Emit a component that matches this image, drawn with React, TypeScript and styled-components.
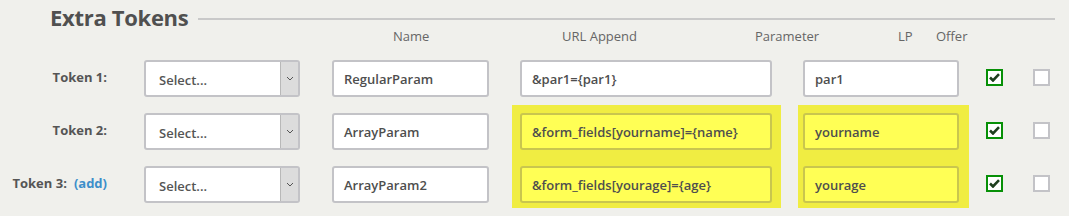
import styled, { createGlobalStyle } from 'styled-components'

const GlobalStyle = createGlobalStyle`
    html, body {
        margin: 0;
        padding: 0;
        background: #f0f0ec;
    }
    body {
        font-family: "Open Sans", "Liberation Sans", sans-serif;
        color: #505050;
    }
`

type Token = {
    label: string
    add?: boolean
    name: string
    url: string
    param: string
    lp: boolean
    offer: boolean
}

const tokens: Token[] = [
    { label: 'Token 1:', name: 'RegularParam', url: '&par1={par1}', param: 'par1', lp: true, offer: false },
    { label: 'Token 2:', name: 'ArrayParam', url: '&form_fields[yourname]={name}', param: 'yourname', lp: true, offer: false },
    { label: 'Token 3:', add: true, name: 'ArrayParam2', url: '&form_fields[yourage]={age}', param: 'yourage', lp: true, offer: false },
]

const Chevron = () => (
    <svg width="8" height="5" viewBox="0 0 8 5">
        <path d="M1 1 L4 4 L7 1" fill="none" stroke="#555" strokeWidth="1" />
    </svg>
)

const Check = () => (
    <svg width="11" height="9" viewBox="0 0 11 9">
        <path d="M1 4.5 L4 7.5 L10 1.2" fill="none" stroke="#1e3f1e" strokeWidth="2.6" />
    </svg>
)

export default function App() {
    return (
        <>
            <GlobalStyle />
            <Section>
                <TitleRow>
                    <Title>Extra Tokens</Title>
                    <Rule />
                </TitleRow>
                <HeaderRow>
                    <span />
                    <HeadLabel>Name</HeadLabel>
                    <HeadLabel>URL Append</HeadLabel>
                    <HeadLabel>Parameter</HeadLabel>
                    <HeadLabel>LP</HeadLabel>
                    <HeadLabel>Offer</HeadLabel>
                </HeaderRow>
                <Grid>
                    <Highlight $col={4} $left={-8} $width={269} />
                    <Highlight $col={5} $left={-5} $width={171} />
                    {tokens.map((t, i) => (
                        <Row key={i} $row={i + 1}>
                            <RowLabel>
                                {t.label}
                                {t.add && <AddLink>(add)</AddLink>}
                            </RowLabel>
                            <SelectBox>
                                <SelectText>Select...</SelectText>
                                <SelectArrow><Chevron /></SelectArrow>
                            </SelectBox>
                            <Field $w={157}>{t.name}</Field>
                            <Field $w={252} $hl={i > 0}>{t.url}</Field>
                            <Field $w={156} $hl={i > 0}>{t.param}</Field>
                            <Box $checked={t.lp}>{t.lp && <Check />}</Box>
                            <Box $checked={t.offer}>{t.offer && <Check />}</Box>
                        </Row>
                    ))}
                </Grid>
            </Section>
        </>
    )
}

const Section = styled.div`
    width: 1069px;
    height: 216px;
    box-sizing: border-box;
    padding: 6px 14px 0 0;
    overflow: hidden;
`
const TitleRow = styled.div`
    display: flex;
    align-items: flex-start;
    padding-left: 50px;
    height: 23px;
`
const Title = styled.h2`
    margin: 0;
    font-size: 22px;
    line-height: 23px;
    font-weight: 700;
    color: #505050;
    letter-spacing: -0.3px;
`
const Rule = styled.div`
    flex: 1;
    height: 2px;
    margin: 12px 0 0 10px;
    background: #c9c9c9;
`
const HeaderRow = styled.div`
    display: grid;
    grid-template-columns: 393px 169px 193px 143px 38px auto;
    font-size: 13px;
    line-height: 14px;
    color: #666;
`
const HeadLabel = styled.span`
    white-space: nowrap;
`
const Grid = styled.div`
    display: grid;
    grid-template-columns: 144px 188px 188px 283px 183px 47px 17px;
    grid-template-rows: repeat(3, 37px);
    row-gap: 16px;
    margin-top: 17px;
`
const Highlight = styled.div<{ $col: number; $left: number; $width: number }>`
    grid-column: ${p => p.$col};
    grid-row: 2 / 4;
    margin: -8px 0 -5px ${p => p.$left}px;
    width: ${p => p.$width}px;
    background: #f0ed42;
`
const Row = styled.div<{ $row: number }>`
    display: contents;
    & > * {
        grid-row: ${p => p.$row};
    }
    & > :nth-child(1) { grid-column: 1; }
    & > :nth-child(2) { grid-column: 2; }
    & > :nth-child(3) { grid-column: 3; }
    & > :nth-child(4) { grid-column: 4; }
    & > :nth-child(5) { grid-column: 5; }
    & > :nth-child(6) { grid-column: 6; }
    & > :nth-child(7) { grid-column: 7; }
`
const RowLabel = styled.div`
    align-self: center;
    justify-self: end;
    padding-right: 37px;
    font-size: 13px;
    font-weight: 700;
    color: #555;
    white-space: nowrap;
    margin-top: -3px;
`
const AddLink = styled.a`
    color: #3d8fca;
    margin-left: 7px;
    cursor: pointer;
`
const SelectBox = styled.div`
    width: 156px;
    box-sizing: border-box;
    display: flex;
    border: 2px solid #c3c3c7;
    border-radius: 3px;
    background: #fff;
`
const SelectText = styled.div`
    flex: 1;
    padding: 3px 0 0 13px;
    display: flex;
    align-items: center;
    font-size: 13px;
    font-weight: 600;
    color: #555;
`
const SelectArrow = styled.div`
    width: 17px;
    display: flex;
    align-items: center;
    justify-content: center;
    background: #dcdcdc;
    border-left: 1px solid #b8b8b8;
`
const Field = styled.div<{ $w: number; $hl?: boolean }>`
    position: relative;
    z-index: 1;
    width: ${p => p.$w}px;
    box-sizing: border-box;
    display: flex;
    align-items: center;
    padding: 0 0 0 10px;
    border: 2px solid ${p => (p.$hl ? '#c9c64e' : '#c3c3c7')};
    border-radius: 3px;
    background: ${p => (p.$hl ? '#ffff55' : '#fff')};
    font-size: 13px;
    font-weight: 600;
    color: #4e4e4e;
    white-space: nowrap;
`
const Box = styled.div<{ $checked: boolean }>`
    align-self: center;
    width: 17px;
    height: 17px;
    box-sizing: border-box;
    margin-top: -2px;
    display: flex;
    align-items: center;
    justify-content: center;
    border: 2px solid ${p => (p.$checked ? '#079007' : '#c3c3c7')};
    background: #fff;
`
